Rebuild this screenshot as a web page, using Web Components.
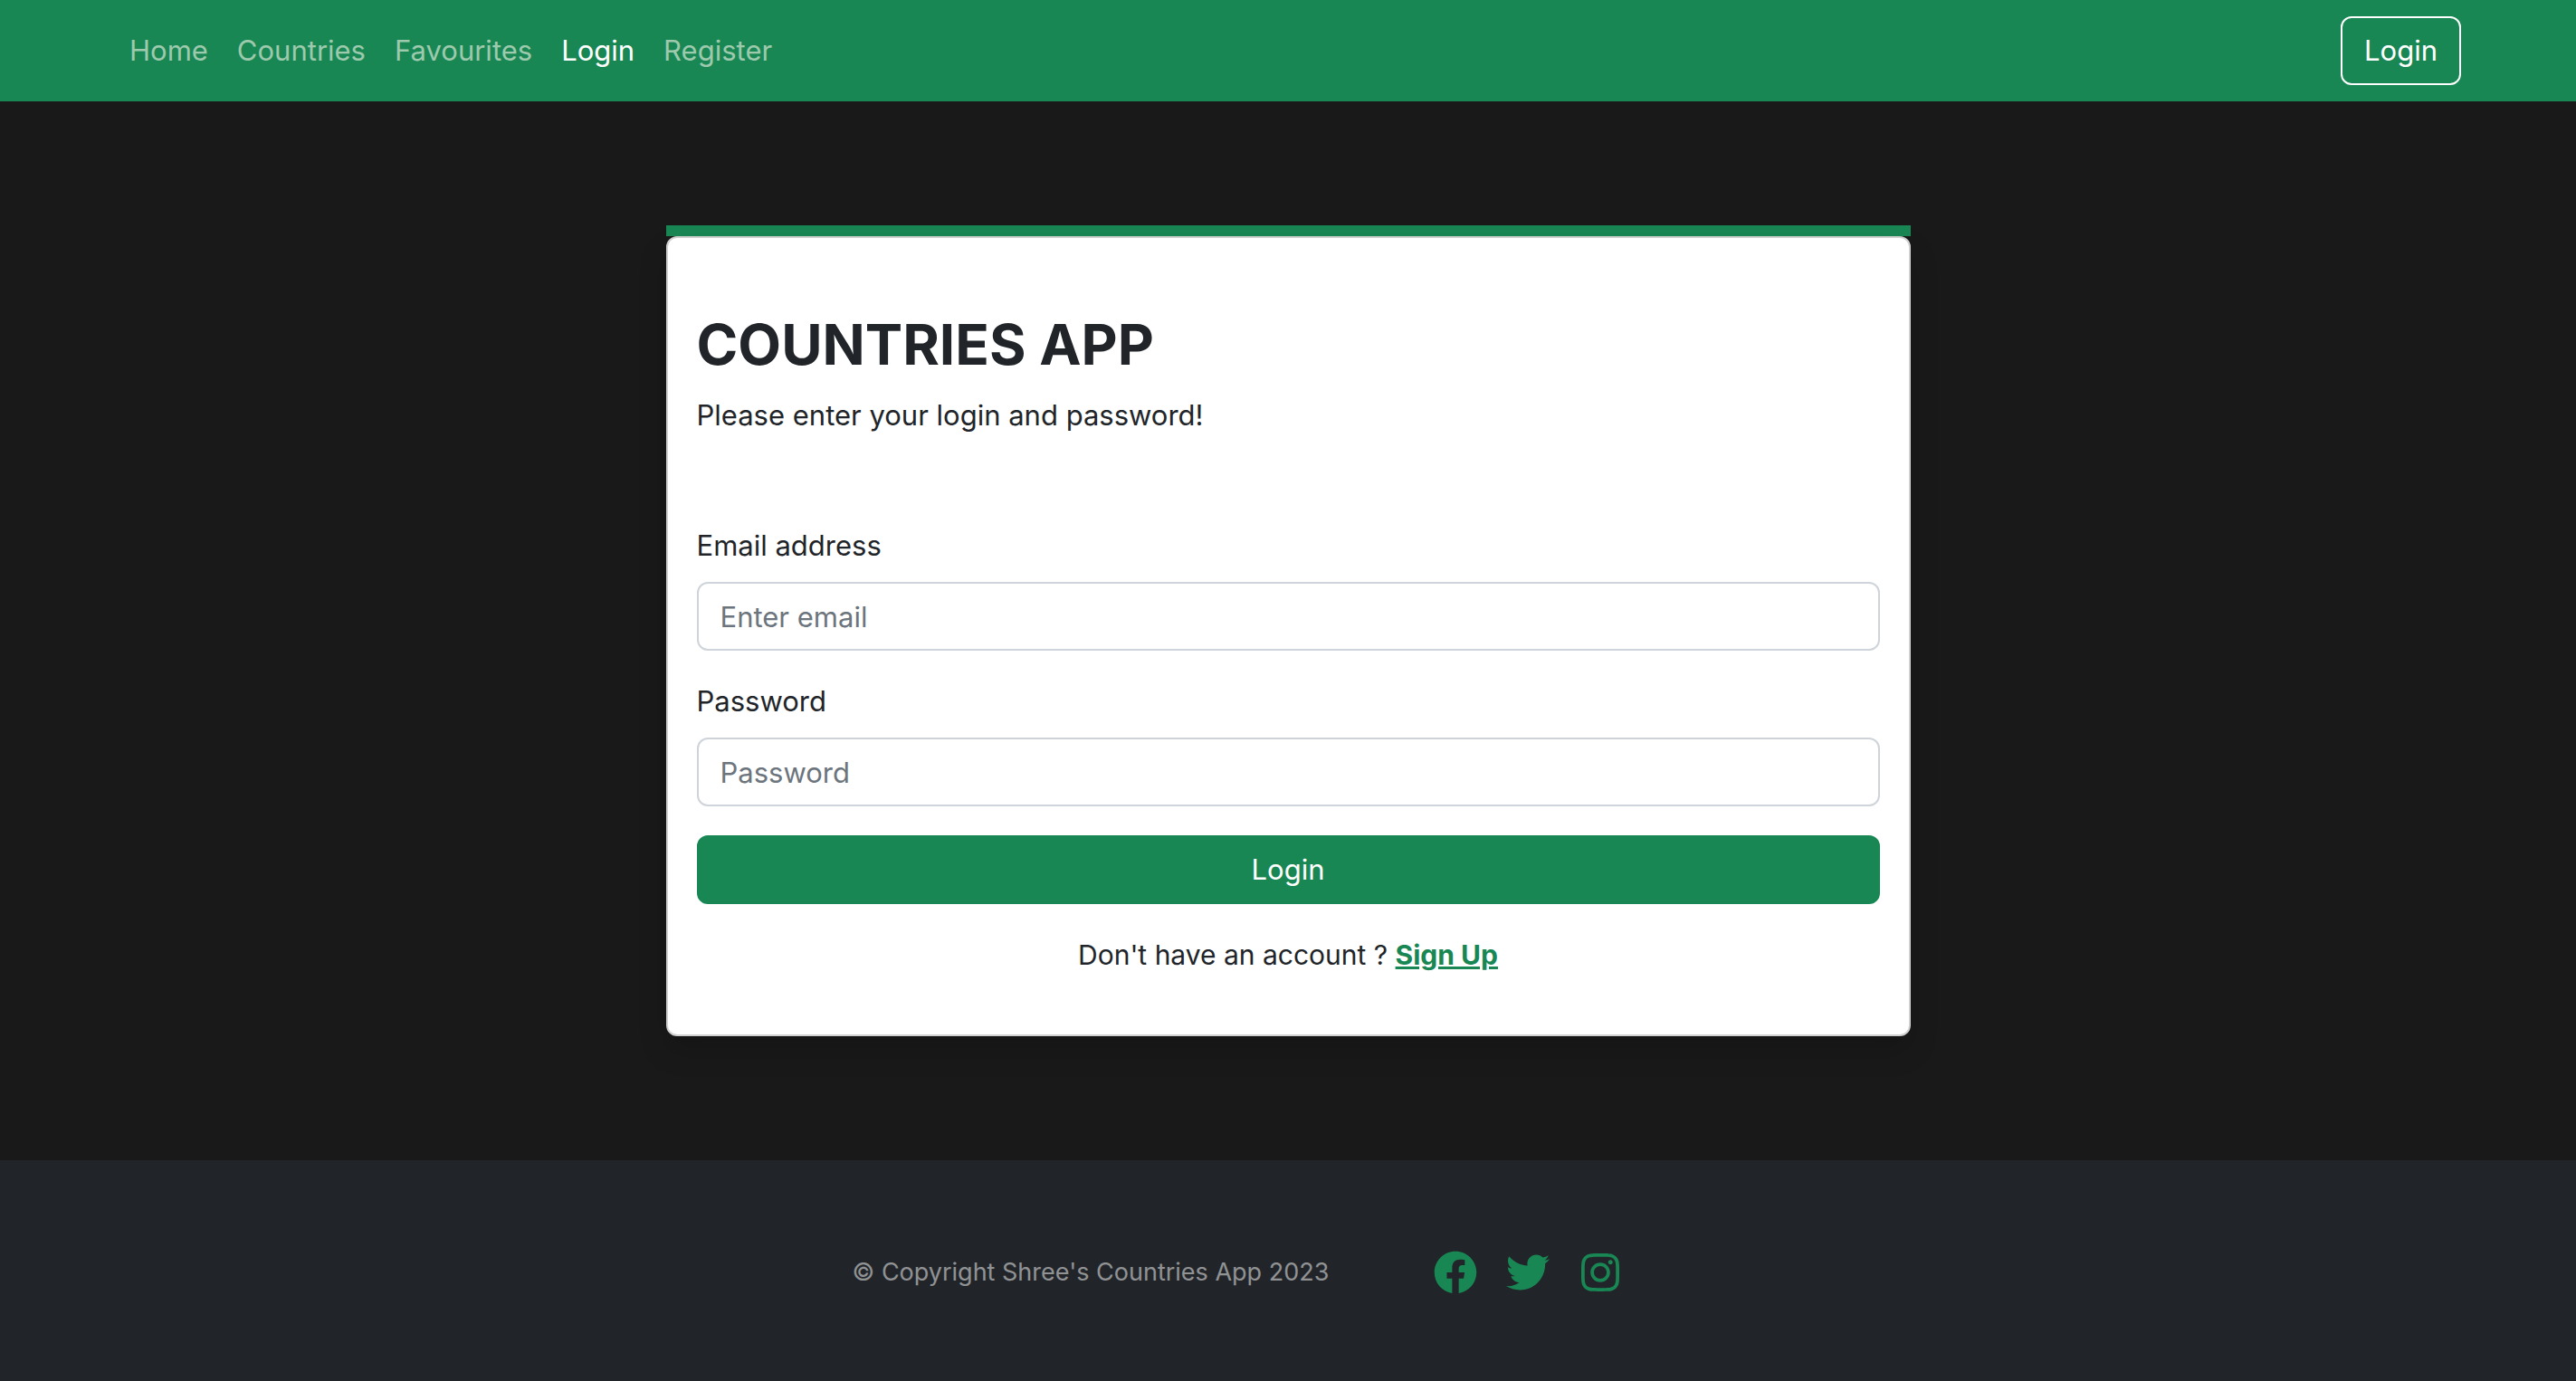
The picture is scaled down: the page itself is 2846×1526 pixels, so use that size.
<!DOCTYPE html>
<html lang="en">
<head>
<meta charset="utf-8">
<title>Countries App</title>
<meta name="viewport" content="width=device-width, initial-scale=1">
<style>
  :root {
    --green: #198754;
    --ink: #212529;
    --text: 31px;
    --line: 48px;
    --radius: 12px;
  }
  body {
    margin: 0;
    background: #191919;
    color: var(--ink);
    font-family: Inter, "Liberation Sans", sans-serif;
    font-size: var(--text);
    line-height: var(--line);
  }
</style>
</head>
<body>
<countries-app></countries-app>
<script>
const define = (name, html, setup) => {
  const template = document.createElement('template');
  template.innerHTML = html;
  customElements.define(name, class extends HTMLElement {
    connectedCallback() {
      if (this.shadowRoot) return;
      this.attachShadow({ mode: 'open' }).append(template.content.cloneNode(true));
      if (setup) setup(this, this.shadowRoot);
    }
  });
};

define('nav-link', `
  <style>
    :host { display: block; }
    a { display: block; padding: 16px; color: #9dc9ad; text-decoration: none; }
    :host([active]) a { color: #fff; }
  </style>
  <a href="#"><slot></slot></a>`,
  (host, root) => { root.querySelector('a').href = host.getAttribute('to') || '#'; });

define('app-button', `
  <style>
    :host { display: block; }
    button {
      display: block; width: 100%; box-sizing: border-box; padding: 12px 24px;
      border: 2px solid var(--green); border-radius: var(--radius);
      background: var(--green); color: #fff; font: inherit; line-height: var(--line); cursor: pointer;
    }
    :host([outline]) button { border-color: #fff; background: transparent; }
  </style>
  <button type="button"><slot></slot></button>`);

define('nav-bar', `
  <style>
    :host { display: block; background: var(--green); }
    nav {
      display: flex; align-items: center; justify-content: space-between;
      max-width: 2640px; margin: 0 auto; padding: 16px 24px; box-sizing: border-box;
    }
    .links { display: flex; }
  </style>
  <nav>
    <div class="links">
      <nav-link to="#home">Home</nav-link>
      <nav-link to="#countries">Countries</nav-link>
      <nav-link to="#favourites">Favourites</nav-link>
      <nav-link to="#login" active>Login</nav-link>
      <nav-link to="#register">Register</nav-link>
    </div>
    <app-button outline>Login</app-button>
  </nav>`);

define('form-field', `
  <style>
    :host { display: block; }
    label { display: block; margin-bottom: 16px; }
    input {
      display: block; width: 100%; height: 76px; box-sizing: border-box; padding: 12px 24px;
      border: 2px solid #ced4da; border-radius: var(--radius);
      background: #fff; color: var(--ink); font: inherit;
    }
    input::placeholder { color: #6c757d; opacity: 1; }
  </style>
  <label for="field"><slot></slot></label>
  <input id="field">`,
  (host, root) => {
    const input = root.querySelector('input');
    input.type = host.getAttribute('type');
    input.placeholder = host.getAttribute('placeholder');
  });

define('login-card', `
  <style>
    :host { display: block; border-top: 12px solid var(--green); }
    section {
      padding: 80px 32px 64px; border: 2px solid #d0d0d0; border-radius: var(--radius);
      background: #fff; box-shadow: 0 16px 32px rgba(0,0,0,.15);
    }
    h1 { margin: 0 0 16px; font-size: 62px; line-height: 76px; font-weight: 700; text-transform: uppercase; }
    p { margin: 0; }
    form { display: flex; flex-direction: column; gap: 32px; margin-top: 96px; }
    .signup { margin-top: 32px; font-size: 30px; text-align: center; }
    a { color: var(--green); font-weight: 700; }
  </style>
  <section>
    <h1>Countries App</h1>
    <p>Please enter your login and password!</p>
    <form>
      <form-field type="email" placeholder="Enter email">Email address</form-field>
      <form-field type="password" placeholder="Password">Password</form-field>
      <app-button>Login</app-button>
    </form>
    <p class="signup">Don't have an account ? <a href="#register">Sign Up</a></p>
  </section>`);

define('social-link', `
  <style>
    :host { display: block; }
    a { display: block; color: var(--green); }
    ::slotted(svg) { display: block; width: 48px; height: 48px; fill: currentColor; }
  </style>
  <a href="#"><slot></slot></a>`,
  (host, root) => { root.querySelector('a').setAttribute('aria-label', host.getAttribute('name')); });

define('page-footer', `
  <style>
    :host { display: block; background: #212529; color: rgba(255,255,255,.5); }
    footer { display: flex; align-items: center; justify-content: center; padding: 100px 24px 96px; }
    p { margin: 0; font-size: 27px; }
    .social { display: flex; gap: 32px; padding: 0 112px 0 116px; }
    social-link { color: var(--green); }
  </style>
  <footer>
    <p>© Copyright Shree's Countries App 2023</p>
    <div class="social">
      <social-link name="Facebook"><svg viewBox="0 0 512 512"><path d="M504 256C504 119 393 8 256 8S8 119 8 256c0 123.78 90.69 226.38 209.25 245V327.69h-63V256h63v-54.64c0-62.15 37-96.48 93.67-96.48 27.14 0 55.52 4.84 55.52 4.84v61h-31.28c-30.8 0-40.41 19.12-40.41 38.73V256h68.78l-11 71.69h-57.78V501C413.31 482.38 504 379.78 504 256z"/></svg></social-link>
      <social-link name="Twitter"><svg viewBox="0 0 512 512"><path d="M459.37 151.716c.325 4.548.325 9.097.325 13.645 0 138.72-105.583 298.558-298.558 298.558-59.452 0-114.68-17.219-161.137-47.106 8.447.974 16.568 1.299 25.34 1.299 49.055 0 94.213-16.568 130.274-44.832-46.132-.975-84.792-31.188-98.112-72.772 6.498.974 12.995 1.624 19.818 1.624 9.421 0 18.843-1.3 27.614-3.573-48.081-9.747-84.143-51.98-84.143-102.985v-1.299c13.969 7.797 30.214 12.67 47.431 13.319-28.264-18.843-46.781-51.005-46.781-87.391 0-19.492 5.197-37.36 14.294-52.954 51.655 63.675 129.3 105.258 216.365 109.807-1.624-7.797-2.599-15.918-2.599-24.04 0-57.828 46.782-104.934 104.934-104.934 30.213 0 57.502 12.67 76.67 33.137 23.715-4.548 46.456-13.32 66.599-25.34-7.798 24.366-24.366 44.833-46.132 57.827 21.117-2.273 41.584-8.122 60.426-16.243-14.292 20.791-32.161 39.308-52.628 54.253z"/></svg></social-link>
      <social-link name="Instagram"><svg viewBox="0 0 448 512"><path d="M224.1 141c-63.6 0-114.9 51.3-114.9 114.9s51.3 114.9 114.9 114.9S339 319.5 339 255.9 287.7 141 224.1 141zm0 189.6c-41.1 0-74.7-33.5-74.7-74.7s33.5-74.7 74.7-74.7 74.7 33.5 74.7 74.7-33.6 74.7-74.7 74.7zm146.4-194.3c0 14.9-12 26.8-26.8 26.8-14.9 0-26.8-12-26.8-26.8s12-26.8 26.8-26.8 26.8 12 26.8 26.8zm76.1 27.2c-1.7-35.9-9.9-67.7-36.2-93.9-26.2-26.2-58-34.4-93.9-36.2-37-2.1-147.9-2.1-184.9 0-35.8 1.7-67.6 9.9-93.9 36.1s-34.4 58-36.2 93.9c-2.1 37-2.1 147.9 0 184.9 1.7 35.9 9.9 67.7 36.2 93.9s58 34.4 93.9 36.2c37 2.1 147.9 2.1 184.9 0 35.9-1.7 67.7-9.9 93.9-36.2 26.2-26.2 34.4-58 36.2-93.9 2.1-37 2.1-147.8 0-184.8zM398.8 388c-7.8 19.6-22.9 34.7-42.6 42.6-29.5 11.7-99.5 9-132.1 9s-102.7 2.6-132.1-9c-19.6-7.8-34.7-22.9-42.6-42.6-11.7-29.5-9-99.5-9-132.1s-2.6-102.7 9-132.1c7.8-19.6 22.9-34.7 42.6-42.6 29.5-11.7 99.5-9 132.1-9s102.7-2.6 132.1 9c19.6 7.8 34.7 22.9 42.6 42.6 11.7 29.5 9 99.5 9 132.1s2.7 102.7-9 132.1z"/></svg></social-link>
    </div>
  </footer>`);

define('countries-app', `
  <style>
    :host { display: flex; flex-direction: column; min-height: 100vh; }
    main { flex: 1; display: flex; align-items: center; justify-content: center; }
    .column { width: 50%; box-sizing: border-box; padding: 0 24px; }
  </style>
  <nav-bar></nav-bar>
  <main><div class="column"><login-card></login-card></div></main>
  <page-footer></page-footer>`);
</script>
</body>
</html>
